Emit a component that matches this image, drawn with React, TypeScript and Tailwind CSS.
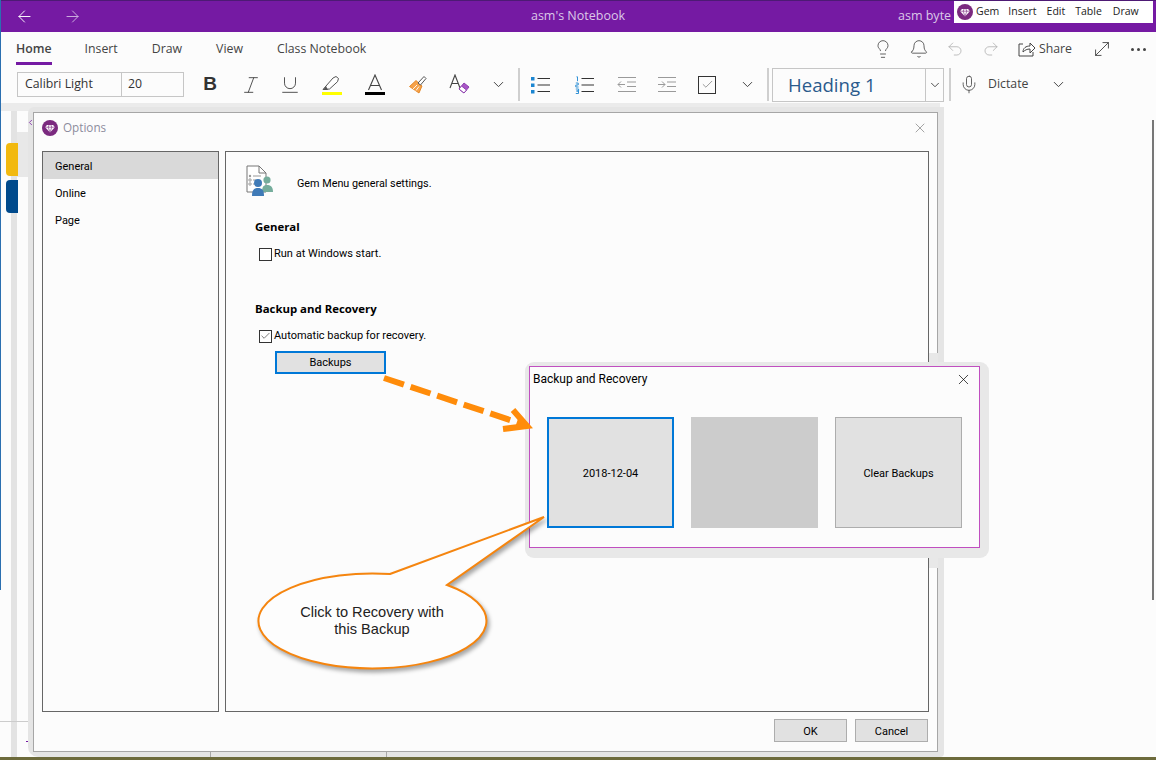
import { ReactNode } from 'react'
import {
  ArrowLeft,
  ArrowRight,
  Bell,
  Check,
  ChevronDown,
  ChevronLeft,
  Italic,
  Lightbulb,
  Mic,
  MoveDiagonal,
  Redo2,
  Underline,
  Undo2,
  X,
} from 'lucide-react'

function GemLogo({ size = 18 }: { size?: number }) {
  return (
    <svg width={size} height={size} viewBox="0 0 18 18">
      <circle cx="9" cy="9" r="9" fill="#7b2a7f" />
      <path d="M5.5 5.5h7l2 2.6L9 14 3.5 8.1z" fill="#fff" />
      <path d="M3.5 8.1h11M7 8.1 9 14l2-5.9M7 8.1l1-2.6M11 8.1l-1-2.6" fill="none" stroke="#7b2a7f" strokeWidth="0.7" />
    </svg>
  )
}

function Tool({ className, children }: { className: string; children: ReactNode }) {
  return <div className={`flex h-[30px] shrink-0 items-center justify-center ${className}`}>{children}</div>
}

function Indent({ out }: { out?: boolean }) {
  return (
    <svg width="20" height="18" viewBox="0 0 20 18" fill="none" stroke="#9a9a9a" strokeWidth="1">
      <path d="M1 1.5h18M10 6h9M10 10.5h9M1 15.5h18" />
      {out ? <path d="M8 8.5H1M4 5.5l-3 3 3 3" /> : <path d="M1 8.5h7M5 5.5l3 3-3 3" />}
    </svg>
  )
}

function Separator({ className }: { className: string }) {
  return <div className={`h-[33px] w-[2px] shrink-0 bg-[#cfcfcf] ${className}`} />
}

function Toolbar() {
  return (
    <div className="flex h-[37px] items-center pl-[17px] text-[#444]">
      <div className="flex h-[25px] w-[167px] shrink-0 border border-[#c6c6c6] text-[12.3px] text-[#333]">
        <div className="flex w-[104px] items-center border-r border-[#c6c6c6] pl-[7px]">Calibri Light</div>
        <div className="flex items-center pl-[6px]">20</div>
      </div>
      <Tool className="ml-[6px] w-10">
        <span className="font-['Liberation_Sans',sans-serif] text-[19px] font-bold text-[#333]">B</span>
      </Tool>
      <Tool className="ml-px w-10">
        <Italic size={22} strokeWidth={1} />
      </Tool>
      <Tool className="-ml-px w-10">
        <Underline size={22} strokeWidth={1} />
      </Tool>
      <Tool className="ml-[2px] w-10">
        <svg width="22" height="22" viewBox="0 0 22 22" fill="none">
          <path d="M2 15.5 5 12l7-8 3-1.5 2.5 2-1 3.2-8 7.3z" fill="#fff" stroke="#555" strokeWidth="1" />
          <path d="M2 16h5l-2-4z" fill="#555" />
          <rect x="1" y="18" width="20" height="3" fill="#ffff00" />
        </svg>
      </Tool>
      <Tool className="ml-[3px] w-10">
        <svg width="22" height="22" viewBox="0 0 22 22" fill="none">
          <path d="M4.5 16 11 1l6.5 15M6.5 11.5h9" stroke="#444" strokeWidth="1.1" />
          <rect x="1" y="18" width="20" height="3" fill="#000" />
        </svg>
      </Tool>
      <Tool className="ml-[3px] w-10">
        <svg width="20" height="20" viewBox="0 0 20 20" fill="none">
          <path d="M8 5.5 14 11l-3 7-9.5-6.5z" fill="#f6a24a" stroke="#e07a10" strokeWidth="0.8" />
          <path d="m5 14 4-4M8 15.5l3-4" stroke="#fff" strokeWidth="0.9" />
          <path d="m10 8 6-6.5 2 2-5.5 6.5z" fill="#fff" stroke="#555" strokeWidth="1" />
        </svg>
      </Tool>
      <Tool className="ml-px w-10">
        <svg width="21" height="21" viewBox="0 0 21 21" fill="none">
          <path d="M1 14 6 1l5 13M3 9.5h6" stroke="#444" strokeWidth="1.1" />
          <path d="m15 9 5 4-5 6-5-4z" fill="#a855c7" stroke="#8e3fae" />
          <path d="m12.5 12 5 4-2.5 3-5-4z" fill="#fff" stroke="#8e3fae" />
        </svg>
      </Tool>
      <Tool className="ml-[9px] w-5">
        <ChevronDown size={17} strokeWidth={1.4} />
      </Tool>
      <Separator className="ml-[10px]" />
      <Tool className="ml-px w-10">
        <svg width="20" height="18" viewBox="0 0 20 18" fill="none">
          <rect x="0" y="1" width="3.5" height="3.5" fill="#1c86d1" />
          <rect x="0" y="7.5" width="3.5" height="3.5" fill="#1c86d1" />
          <rect x="0" y="14" width="3.5" height="3.5" fill="#1c86d1" />
          <path d="M6.5 2.5H19M6.5 9H19M6.5 15.5H19" stroke="#333" />
        </svg>
      </Tool>
      <Tool className="ml-[4px] w-10">
        <svg width="20" height="18" viewBox="0 0 20 18" fill="none">
          <path d="M1.5 0.8h1v4.4M0.8 7h2.4v2H0.8v2h2.8M0.8 13h2.8v2H1.5h2v2.5H0.8" stroke="#1c86d1" strokeWidth="0.9" />
          <path d="M6.5 2.5H19M6.5 9H19M6.5 15.5H19" stroke="#333" />
        </svg>
      </Tool>
      <Tool className="ml-[2px] w-10">
        <Indent out />
      </Tool>
      <Tool className="w-10">
        <Indent />
      </Tool>
      <Tool className="w-10">
        <div className="flex size-[18px] items-center justify-center border border-[#333]">
          <Check size={13} strokeWidth={1} />
        </div>
      </Tool>
      <Tool className="ml-[10px] w-5">
        <ChevronDown size={17} strokeWidth={1.4} />
      </Tool>
      <Separator className="ml-[10px]" />
      <div className="ml-[3px] flex h-[34px] w-[172px] shrink-0 border border-[#c6c6c6]">
        <div className="flex w-[153px] items-center border-r border-[#c6c6c6] pl-[15px] text-[18.6px] text-[#2a5a8c]">
          Heading 1
        </div>
        <div className="flex flex-1 items-center justify-center">
          <ChevronDown size={14} strokeWidth={1.6} />
        </div>
      </div>
      <Separator className="ml-[5px]" />
      <Tool className="ml-[8px] w-5">
        <Mic size={21} strokeWidth={1} />
      </Tool>
      <div className="ml-[9px] text-[12.3px] text-[#444]">Dictate</div>
      <Tool className="ml-[20px] w-5">
        <ChevronDown size={17} strokeWidth={1.4} />
      </Tool>
    </div>
  )
}

function OptionsDialog() {
  return (
    <div className="absolute left-[28px] top-[4px] rounded-bl-[10px] rounded-br-[4px] rounded-tl-[6px] bg-[#e5e5e5] pb-[5px] pl-[5px] pr-[6px] pt-[5px]">
      <div className="absolute bottom-0 left-[182px] h-[5px] w-px bg-[#a8a8a8]" />
      <div className="absolute bottom-0 left-[358px] h-[5px] w-px bg-[#a8a8a8]" />
      <div className="flex h-[640px] w-[905px] flex-col border border-[#a6a6a6] bg-[#fcfcfc] font-['Roboto',sans-serif] text-[11px] text-black">
        <div className="flex h-[38px] items-center pb-[8px] pl-[8px] pr-[9px]">
          <GemLogo size={16} />
          <span className="ml-[5px] font-['Open_Sans',sans-serif] text-[11.7px] text-[#8c8c9c]">Options</span>
          <X size={16} strokeWidth={1} className="ml-auto text-[#777]" />
        </div>
        <div className="flex gap-[6px] pl-[8px]">
          <div className="h-[561px] w-[177px] border border-[#666]">
            <div className="flex h-[27px] items-center bg-[#d9d9d9] pl-[12px] pt-[4px]">General</div>
            <div className="flex h-[27px] items-center pl-[12px] pt-[4px]">Online</div>
            <div className="flex h-[27px] items-center pl-[12px] pt-[4px]">Page</div>
          </div>
          <div className="h-[561px] w-[704px] border border-[#666] pl-[20px] pt-[13px]">
            <div className="flex items-center">
              <svg width="28" height="32" viewBox="0 0 28 32" fill="none">
                <path d="M1 1h12l7 7v19H1z" fill="#fff" stroke="#777" />
                <path d="M13 1v7h7" stroke="#777" />
                <path d="M7 11h8M7 15h3M7 19h3" stroke="#999" />
                <circle cx="4" cy="11" r="1.2" fill="#999" />
                <circle cx="4" cy="15" r="1.2" stroke="#999" />
                <circle cx="4" cy="19" r="1.2" stroke="#999" />
                <circle cx="21" cy="15" r="3.6" fill="#75ad9c" />
                <path d="M16 27c0-6 2-7 5-7s6 1 6 7z" fill="#75ad9c" />
                <circle cx="12" cy="18" r="4" fill="#3f7ab7" />
                <path d="M6 31c0-6 2-8 6-8s6 2 6 8z" fill="#3f7ab7" />
              </svg>
              <span className="ml-[23px] mt-[7px] text-[10.8px]">Gem Menu general settings.</span>
            </div>
            <div className="ml-[9px] mt-[21px] font-['Open_Sans',sans-serif] text-[11.4px] font-bold">General</div>
            <div className="ml-[13px] mt-[12px] flex h-[14px] items-center">
              <div className="size-[13px] border border-[#333] bg-white" />
              <span className="ml-[2px]">Run at Windows start.</span>
            </div>
            <div className="ml-[9px] mt-[39px] font-['Open_Sans',sans-serif] text-[11.4px] font-bold">Backup and Recovery</div>
            <div className="ml-[13px] mt-[12px] flex h-[14px] items-center">
              <div className="flex size-[13px] items-center justify-center border border-[#333] bg-white">
                <Check size={12} strokeWidth={1.4} className="text-[#333]" />
              </div>
              <span className="ml-[2px]">Automatic backup for recovery.</span>
            </div>
            <div className="ml-[29px] mt-[8px] flex h-[23px] w-[111px] items-center justify-center border-2 border-[#0078d7] bg-[#e1e1e1] pt-[1px]">
              Backups
            </div>
          </div>
        </div>
        <div className="mt-[7px] flex justify-end gap-[8px] pr-[9px]">
          <div className="flex h-[23px] w-[73px] items-center justify-center border border-[#adadad] bg-[#e1e1e1] pt-[3px]">OK</div>
          <div className="flex h-[23px] w-[73px] items-center justify-center border border-[#adadad] bg-[#e1e1e1] pt-[3px]">Cancel</div>
        </div>
      </div>
    </div>
  )
}

function BackupPopup() {
  return (
    <div className="absolute left-[525px] top-[259px] rounded-[9px] bg-[#e8e8e8] pb-[10px] pl-[4px] pr-[9px] pt-[4px]">
      <div className="h-[182px] w-[451px] border border-[#c04fc0] bg-[#fcfcfc] font-['Roboto',sans-serif] text-[11px] text-black">
        <div className="flex h-[50px] items-start pl-[3px] pr-[7px] pt-[3px] text-[12px]">
          <span>Backup and Recovery</span>
          <X size={17} strokeWidth={1} className="ml-auto mt-[1px]" />
        </div>
        <div className="flex gap-[17px] pl-[17px]">
          <div className="flex h-[111px] w-[127px] items-center justify-center border-2 border-[#0078d7] bg-[#e1e1e1] pt-[3px]">2018-12-04</div>
          <div className="h-[111px] w-[127px] bg-[#cccccc]" />
          <div className="flex h-[111px] w-[127px] items-center justify-center border border-[#adadad] bg-[#e1e1e1] pt-[3px]">Clear Backups</div>
        </div>
      </div>
    </div>
  )
}

export default function App() {
  return (
    <div className="relative flex h-[760px] w-[1156px] flex-col overflow-hidden bg-[#fcfcfc] font-['Open_Sans',sans-serif]">
      <div className="relative flex h-[32px] shrink-0 items-center justify-center border-t border-[#4d1a74] bg-[#751aa3] text-[12.5px] text-[#dcc8e8]">
        <ArrowLeft size={19} strokeWidth={1.2} className="absolute left-[15px] text-white" />
        <ArrowRight size={19} strokeWidth={1.2} className="absolute left-[63px] text-[#cfb2e0]" />
        <span>asm's Notebook</span>
        <span className="absolute left-[898px]">asm byte</span>
        <div className="absolute left-[954px] top-0 flex h-[22px] w-[199px] items-center bg-white pl-[3px] text-[10.5px] text-[#222]">
          <GemLogo size={16} />
          <span className="ml-[3px]">Gem</span>
          <span className="ml-[9px]">Insert</span>
          <span className="ml-[10px]">Edit</span>
          <span className="ml-[10px]">Table</span>
          <span className="ml-[11px]">Draw</span>
        </div>
      </div>

      <div className="flex h-[34px] shrink-0 items-center pl-[16px] text-[12.3px] text-[#444]">
        <div className="relative font-semibold">
          Home
          <div className="absolute -bottom-[7px] left-0 h-[3px] w-full bg-[#751aa3]" />
        </div>
        <span className="ml-[33px]">Insert</span>
        <span className="ml-[34px]">Draw</span>
        <span className="ml-[34px]">View</span>
        <span className="ml-[34px]">Class Notebook</span>
        <div className="ml-auto flex items-center pr-[10px]">
          <Lightbulb size={20} strokeWidth={1} />
          <Bell size={20} strokeWidth={1} className="ml-[16px]" />
          <Undo2 size={18} strokeWidth={1} className="ml-[17px] text-[#aaa]" />
          <Redo2 size={18} strokeWidth={1} className="ml-[18px] text-[#aaa]" />
          <svg width="18" height="18" viewBox="0 0 18 18" fill="none" stroke="#444" className="ml-[18px]">
            <path d="M5 4H1v12h14v-4" />
            <path d="M5 12c0-4 3-6 7-6V3l5 5-5 5V9c-3 0-5 1-7 3z" fill="#fff" />
          </svg>
          <span className="ml-[3px]">Share</span>
          <MoveDiagonal size={22} strokeWidth={1} className="ml-[19px]" />
          <span className="ml-[18px] flex gap-[3px]">
            <i className="size-[3px] rounded-full bg-[#444]" />
            <i className="size-[3px] rounded-full bg-[#444]" />
            <i className="size-[3px] rounded-full bg-[#444]" />
          </span>
        </div>
      </div>

      <Toolbar />

      <div className="relative flex-1">
        <div className="h-[8px] w-[940px] bg-[#ebebeb]" />
        <div className="absolute bottom-[3px] left-[11px] top-[8px] w-[6px] bg-[#e3e3e3]" />
        <div className="absolute left-[17px] top-[29px] h-[45px] w-[12px] bg-[#e8e8e8]" />
        <div className="absolute left-[6px] top-[40px] h-[33px] w-[12px] rounded-l-[4px] bg-[#f2b90f]" />
        <div className="absolute left-[6px] top-[77px] h-[33px] w-[12px] rounded-l-[4px] bg-[#004a8c]" />
        <div className="absolute bottom-[38px] left-0 h-px w-[33px] bg-[#cccccc]" />
        <div className="absolute bottom-[18px] left-[26px] h-px w-[10px] bg-[#751aa3]" />
        <div className="absolute bottom-[2px] left-[403px] h-[3px] w-[470px] bg-[#707070]" />
        <div className="absolute bottom-[160px] right-[2px] top-[17px] w-[2px] bg-[#777]" />
        <div className="absolute bottom-0 left-0 h-[3px] w-full bg-[#6d6b3c]" />
        <OptionsDialog />
        <ChevronLeft size={9} strokeWidth={2} className="absolute left-[26px] top-[15px] text-[#751aa3]" />
        <div className="absolute left-[929px] top-[250px] h-[215px] w-[9px] bg-[#e8e8e8]" />
        <BackupPopup />

        <svg width="1156" height="657" viewBox="0 103 1156 657" fill="none" className="pointer-events-none absolute left-0 top-0">
          <path d="M384 378 522 424" stroke="#ff8c0a" strokeWidth="6" strokeDasharray="21 7" />
          <path d="M513 410 527 426 503 429" stroke="#ff8c0a" strokeWidth="6" />
          <path
            d="M390 574 544 517 447 585A114 47.5 0 1 1 390 574Z"
            fill="#fdfdfd"
            stroke="#f5850f"
            strokeWidth="2"
            className="drop-shadow-[2px_3px_2px_rgba(0,0,0,0.35)]"
          />
        </svg>
        <div className="absolute left-[282px] top-[501px] w-[180px] text-center font-['Liberation_Sans',sans-serif] text-[14.6px] leading-[17px] text-[#222]">
          Click to Recovery with
          <br />
          this Backup
        </div>
      </div>

      <div className="absolute left-0 top-0 h-[590px] w-px bg-[#2a6fb0]" />
    </div>
  )
}
